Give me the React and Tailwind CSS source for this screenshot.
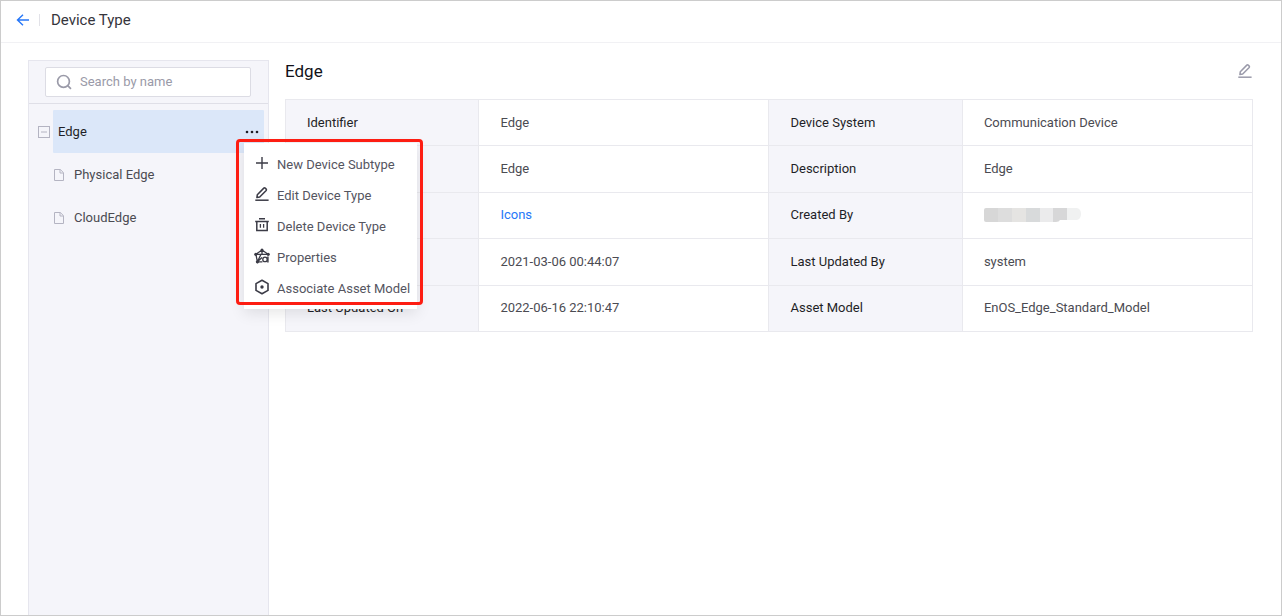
import React from "react";

function BackIcon() {
  return (
    <svg width="14" height="12" viewBox="0 0 14 12" fill="none" stroke="currentColor" strokeWidth="1.4" aria-hidden="true">
      <path d="M13 6H1.5M7 0.8L1.5 6L7 11.2" />
    </svg>
  );
}

function SearchIcon() {
  return (
    <svg className="shrink-0" width="16" height="16" viewBox="0 0 16 16" fill="none" stroke="currentColor" strokeWidth="1.7" aria-hidden="true">
      <circle cx="7.5" cy="7.4" r="5.9" />
      <path d="M11.7 11.6L15 14.8" />
    </svg>
  );
}

function CollapseIcon() {
  return (
    <svg width="12" height="12" viewBox="0 0 12 12" fill="none" stroke="currentColor" aria-hidden="true">
      <rect x="0.5" y="0.5" width="11" height="11" />
      <path d="M3 6H9" />
    </svg>
  );
}

function FileIcon() {
  return (
    <svg width="12" height="12" viewBox="0 0 12 12" fill="none" stroke="currentColor" aria-hidden="true">
      <path d="M1.5 0.5H7.3L10.5 3.7V11.5H1.5Z" />
      <path d="M7 0.5V4H10.5" />
    </svg>
  );
}

function PlusIcon() {
  return (
    <svg width="16" height="16" viewBox="0 0 16 16" fill="none" stroke="currentColor" strokeWidth="1.4" aria-hidden="true">
      <path d="M8 2V14M2 8H14" />
    </svg>
  );
}

function PencilIcon() {
  return (
    <svg width="16" height="16" viewBox="0 0 16 16" fill="none" stroke="currentColor" strokeWidth="1.5" strokeLinejoin="round" aria-hidden="true">
      <path d="M1.3 14.2H14.6" />
      <path d="M2.9 11.5L3.3 8.7L9.8 2.1Q10.5 1.5 11.2 2.1L12.2 3.1Q12.8 3.8 12.2 4.5L5.7 11Z" />
    </svg>
  );
}

function TrashIcon() {
  return (
    <svg width="16" height="16" viewBox="0 0 16 16" fill="none" stroke="currentColor" strokeWidth="1.5" aria-hidden="true">
      <path d="M5 1.8H11M1.2 4.4H14.8M2.8 4.4V13.6H13.2V4.4" />
      <path d="M6.4 7V10.8M9.6 7V10.8" strokeWidth="1.3" />
    </svg>
  );
}

function PropertiesIcon() {
  return (
    <svg width="16" height="16" viewBox="0 0 16 16" fill="none" stroke="currentColor" strokeWidth="1.3" aria-hidden="true">
      <path d="M8 2L1.9 6.3L3.4 13.8L7 6.3M8 2L14.1 6.3M1.9 6.3H14.1M8 2V6.3M3.4 13.8H8.4M3.4 13.8L8 9.6" />
      <circle cx="11" cy="11.4" r="2.2" />
      <path d="M13.9 8.4V14.5" strokeWidth="1.5" />
      <circle cx="8" cy="1.9" r="1.5" fill="currentColor" stroke="none" />
      <circle cx="1.8" cy="6.3" r="1.6" fill="currentColor" stroke="none" />
      <circle cx="14.2" cy="6.3" r="1.6" fill="currentColor" stroke="none" />
      <circle cx="3.4" cy="13.8" r="1.6" fill="currentColor" stroke="none" />
    </svg>
  );
}

function ModelIcon() {
  return (
    <svg width="16" height="16" viewBox="0 0 16 16" fill="none" stroke="currentColor" strokeWidth="1.6" strokeLinejoin="round" aria-hidden="true">
      <path d="M8 1.2L14 4.6V11.4L8 14.8L2 11.4V4.6Z" />
      <circle cx="8" cy="8" r="1.7" fill="currentColor" stroke="none" />
    </svg>
  );
}

function MoreIcon() {
  return (
    <svg width="14" height="4" viewBox="0 0 14 4" fill="currentColor" aria-hidden="true">
      <circle cx="2" cy="2" r="1.3" />
      <circle cx="7" cy="2" r="1.3" />
      <circle cx="12" cy="2" r="1.3" />
    </svg>
  );
}

function MaskedName() {
  return (
    <svg width="97" height="14" viewBox="0 0 97 14" role="img" aria-label="Hidden name">
      <path d="M2 0H14V14H2Q0 14 0 12V2Q0 0 2 0Z" fill="#d7d7d7" />
      <rect x="14" width="14" height="14" fill="#dddddd" />
      <rect x="28" width="14" height="14" fill="#e5e4e2" />
      <rect x="42" width="14" height="14" fill="#d8dadb" />
      <rect x="56" width="13" height="14" fill="#ebebec" />
      <path d="M69 0H83V12H76Q75 14 72 14H69Z" fill="#d7d7d8" />
      <path d="M83 0H93Q97 1 97 6Q97 11 93 12H83Z" fill="#f0f1f1" />
    </svg>
  );
}

const actions = [
  { label: "New Device Subtype", Icon: PlusIcon },
  { label: "Edit Device Type", Icon: PencilIcon },
  { label: "Delete Device Type", Icon: TrashIcon },
  { label: "Properties", Icon: PropertiesIcon },
  { label: "Associate Asset Model", Icon: ModelIcon },
];

const rows = [
  { left: "Identifier", leftValue: "Edge", right: "Device System", rightValue: "Communication Device" },
  { leftHint: "Name", leftValue: "Edge", right: "Description", rightValue: "Edge" },
  { leftHint: "Icon", leftValue: <a href="#icons" className="text-[#2677f8]">Icons</a>, right: "Created By", rightValue: <MaskedName /> },
  { leftHint: "Created On", leftValue: "2021-03-06 00:44:07", right: "Last Updated By", rightValue: "system" },
  { left: "Last Updated On", leftValue: "2022-06-16 22:10:47", right: "Asset Model", rightValue: "EnOS_Edge_Standard_Model" },
];

function Label({ children, hint }) {
  return (
    <th scope="row" aria-label={hint} className="border border-[#e9e9ee] bg-[#f5f5fa] px-[21px] font-normal text-[#1f1f27]">
      {children}
    </th>
  );
}

function Value({ children }) {
  return <td className="border border-[#e9e9ee] px-[21px] text-[#4b4b52]">{children}</td>;
}

function ActionMenu() {
  return (
    <div className="absolute top-[33px] left-[191px] z-10">
      <ul role="menu" className="w-[173px] bg-white pt-[6px] pb-[5px] shadow-[0_4px_14px_rgba(0,0,0,0.1)]">
        {actions.map(({ label, Icon }) => (
          <li key={label} role="none">
            <button role="menuitem" className="flex h-[31px] w-full items-center gap-[7px] pl-[10px] whitespace-nowrap text-[#55555f]">
              <span className="pb-[4px] text-[#3b3b46]"><Icon /></span>
              {label}
            </button>
          </li>
        ))}
      </ul>
      <div className="pointer-events-none absolute -top-1 -right-[6px] bottom-1 -left-2 rounded-[4px] border-3 border-[#fd1d12]" />
    </div>
  );
}

function Sidebar() {
  return (
    <aside className="w-[241px] shrink-0 border border-b-0 border-[#e6e6ee] bg-[#f5f5fa]">
      <div className="border-b border-[#dfdfe7] px-4 py-[6px]">
        <label className="flex h-[30px] w-[206px] items-center gap-2 rounded-[2px] border border-[#dcdce4] bg-white px-[10px] text-[#9a9aa8]">
          <SearchIcon />
          <input
            type="text"
            aria-label="Search by name"
            placeholder="Search by name"
            className="w-full min-w-0 bg-transparent outline-none placeholder:text-[#9a9aa8]"
          />
        </label>
      </div>
      <ul className="pt-[6px] text-[#4b4b52]">
        <li>
          <div className="flex items-center gap-[3px] pr-1 pl-[9px]">
            <button aria-label="Collapse Edge" className="text-[#b4b4c2]"><CollapseIcon /></button>
            <div className="relative flex h-[43px] flex-1 items-center justify-between rounded-[1px] bg-[#dbe7f9] px-[5px] text-[#1f1f27]">
              <span>Edge</span>
              <button aria-label="More actions" aria-expanded="true"><MoreIcon /></button>
              <ActionMenu />
            </div>
          </div>
          <ul>
            {["Physical Edge", "CloudEdge"].map((name) => (
              <li key={name} className="flex h-[43px] items-center gap-[9px] pl-6">
                <span className="text-[#b4b4c2]"><FileIcon /></span>
                {name}
              </li>
            ))}
          </ul>
        </li>
      </ul>
    </aside>
  );
}

export default function App() {
  return (
    <div className="flex min-h-screen flex-col border border-[#cccccc] bg-white font-[Roboto,'Noto_Sans',sans-serif] text-[13px] leading-5">
      <header className="flex h-[42px] items-center border-b border-[#f1f1f4] pl-[15px] pb-[4px]">
        <a href="#back" aria-label="Back" className="text-[#2677f8]"><BackIcon /></a>
        <span className="mr-[11px] ml-[9px] h-3 w-px bg-[#e2e2e8]" />
        <h1 className="text-[15px] text-[#35353c]">Device Type</h1>
      </header>
      <div className="flex flex-1 gap-4 pt-[17px] pr-7 pl-[27px]">
        <Sidebar />
        <main className="min-w-0 flex-1">
          <div className="flex h-[39px] items-center justify-between pb-[18px]">
            <h2 className="text-[17px] text-[#111118]">Edge</h2>
            <button aria-label="Edit" className="text-[#9a9aaa]"><PencilIcon /></button>
          </div>
          <table className="h-[233px] w-full table-fixed border-collapse text-left">
            <colgroup>
              <col className="w-1/5" />
              <col className="w-3/10" />
              <col className="w-1/5" />
              <col className="w-3/10" />
            </colgroup>
            <tbody>
              {rows.map((row) => (
                <tr key={row.right}>
                  <Label hint={row.leftHint}>{row.left}</Label>
                  <Value>{row.leftValue}</Value>
                  <Label>{row.right}</Label>
                  <Value>{row.rightValue}</Value>
                </tr>
              ))}
            </tbody>
          </table>
        </main>
      </div>
    </div>
  );
}
